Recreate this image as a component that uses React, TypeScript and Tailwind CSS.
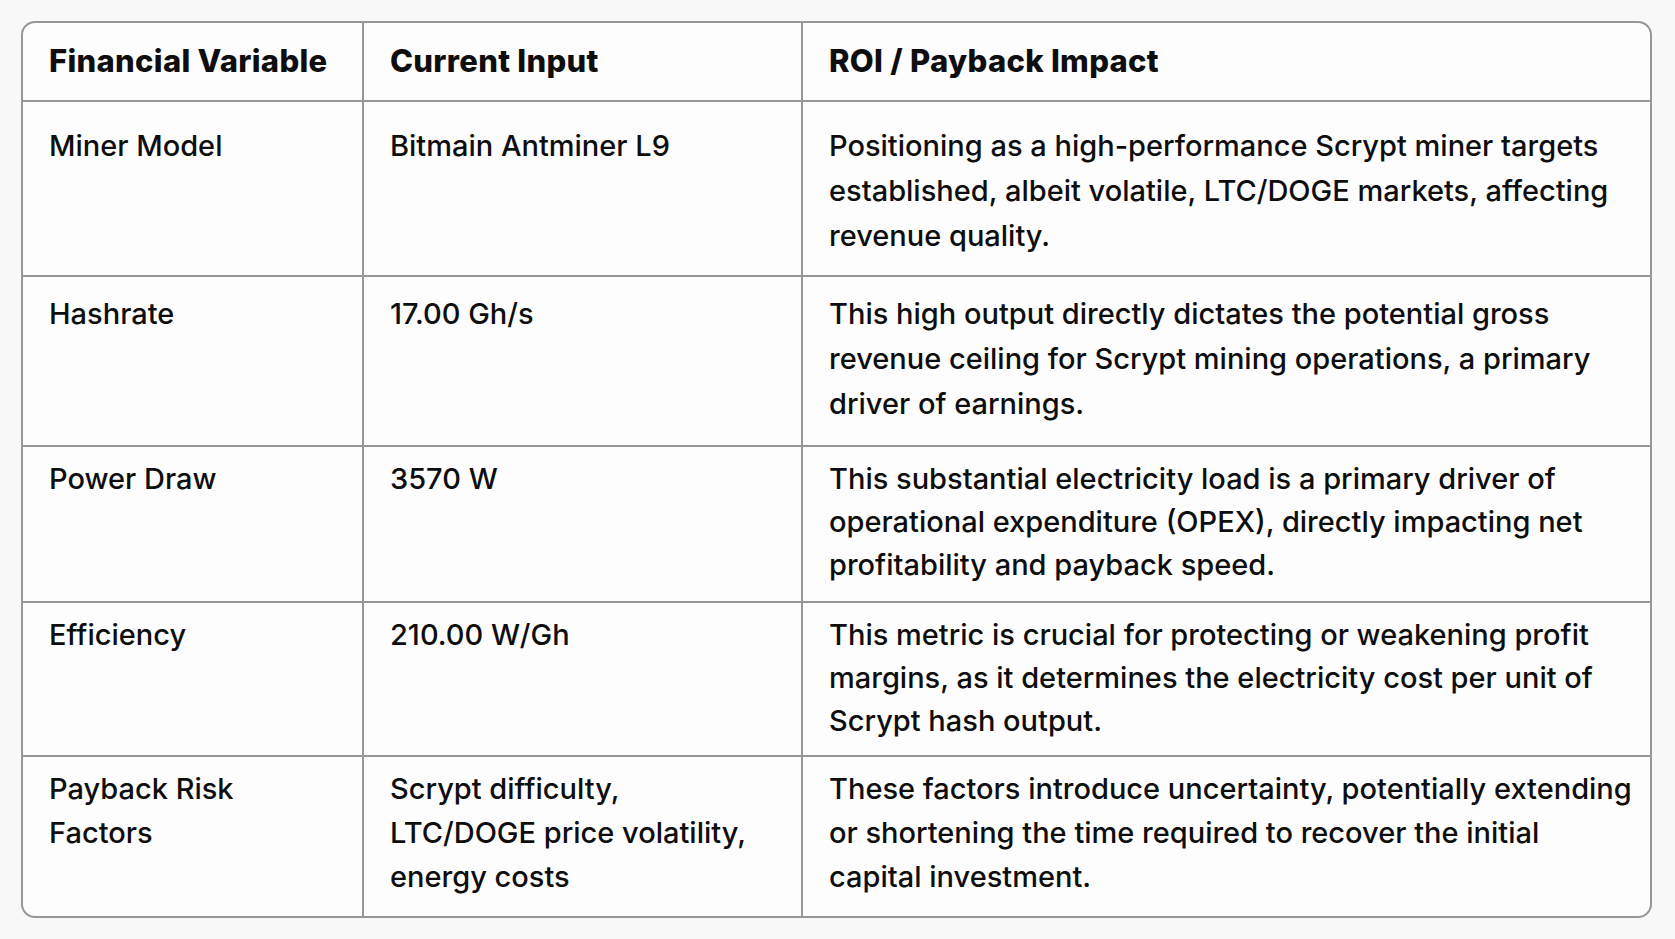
const columns = ['Financial Variable', 'Current Input', 'ROI / Payback Impact']

type Row = {
  cells: string[][]
  rowClass: string
  cellPad: string
}

// row heights / paddings follow the reference closely
const rows: Row[] = [
  {
    rowClass: 'h-[175px] leading-[45px] border-b-2',
    cellPad: 'pt-[21px]',
    cells: [
      ['Miner Model'],
      ['Bitmain Antminer L9'],
      [
        'Positioning as a high-performance Scrypt miner targets',
        'established, albeit volatile, LTC/DOGE markets, affecting',
        'revenue quality.',
      ],
    ],
  },
  {
    rowClass: 'h-[170px] leading-[45px] border-b-2',
    cellPad: 'pt-[14px]',
    cells: [
      ['Hashrate'],
      ['17.00 Gh/s'],
      [
        'This high output directly dictates the potential gross',
        'revenue ceiling for Scrypt mining operations, a primary',
        'driver of earnings.',
      ],
    ],
  },
  {
    rowClass: 'h-[156px] leading-[43px] border-b-2',
    cellPad: 'pt-[10px]',
    cells: [
      ['Power Draw'],
      ['3570 W'],
      [
        'This substantial electricity load is a primary driver of',
        'operational expenditure (OPEX), directly impacting net',
        'profitability and payback speed.',
      ],
    ],
  },
  {
    rowClass: 'h-[154px] leading-[43px] border-b-2',
    cellPad: 'pt-[10px]',
    cells: [
      ['Efficiency'],
      ['210.00 W/Gh'],
      [
        'This metric is crucial for protecting or weakening profit',
        'margins, as it determines the electricity cost per unit of',
        'Scrypt hash output.',
      ],
    ],
  },
  {
    rowClass: 'h-[159px] leading-[44px]',
    cellPad: 'pt-[10px]',
    cells: [
      ['Payback Risk', 'Factors'],
      ['Scrypt difficulty,', 'LTC/DOGE price volatility,', 'energy costs'],
      [
        'These factors introduce uncertainty, potentially extending',
        'or shortening the time required to recover the initial',
        'capital investment.',
      ],
    ],
  },
]

function Cell({ lines, last, pad }: { lines: string[]; last: boolean; pad: string }) {
  return (
    <div className={`pl-[26px] pr-4 ${pad} ${last ? '' : 'border-r-2 border-[#979797]'}`}>
      {lines.map((l) => (
        <span key={l} className="block whitespace-nowrap">
          {l}
        </span>
      ))}
    </div>
  )
}

export default function App() {
  return (
    <div
      className="min-h-screen bg-[#f8f8f8] pt-[21px] pl-[21px] pr-[23px] text-[#0e0e0e]"
      style={{ fontFamily: 'Inter, "Liberation Sans", Arial, sans-serif' }}
    >
      <div className="w-[1631px] overflow-hidden rounded-[14px] border-2 border-[#979797] bg-[#fdfdfd] text-[29px] font-medium">
        <div className="grid h-[79px] grid-cols-[341px_439px_1fr] border-b-2 border-[#979797] text-[31px] font-extrabold tracking-[0.3px]">
          {columns.map((c, i) => (
            <div
              key={c}
              className={`flex items-center pl-[26px] ${i < 2 ? 'border-r-2 border-[#979797]' : ''}`}
            >
              {c}
            </div>
          ))}
        </div>

        {rows.map((r) => (
          <div
            key={r.cells[0][0]}
            className={`grid grid-cols-[341px_439px_1fr] border-[#979797] ${r.rowClass}`}
          >
            {r.cells.map((lines, i) => (
              <Cell key={i} lines={lines} last={i === 2} pad={r.cellPad} />
            ))}
          </div>
        ))}
      </div>
    </div>
  )
}
